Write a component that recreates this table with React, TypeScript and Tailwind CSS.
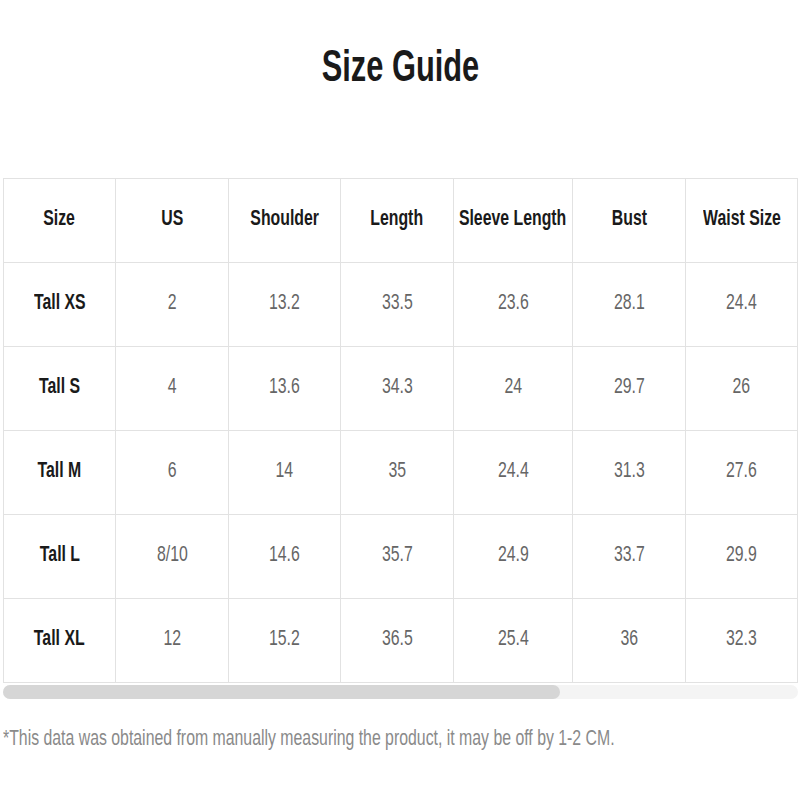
import React from "react";

const headers = ["Size", "US", "Shoulder", "Length", "Sleeve Length", "Bust", "Waist Size"];

const rows = [
  ["Tall XS", "2", "13.2", "33.5", "23.6", "28.1", "24.4"],
  ["Tall S", "4", "13.6", "34.3", "24", "29.7", "26"],
  ["Tall M", "6", "14", "35", "24.4", "31.3", "27.6"],
  ["Tall L", "8/10", "14.6", "35.7", "24.9", "33.7", "29.9"],
  ["Tall XL", "12", "15.2", "36.5", "25.4", "36", "32.3"],
];

const colWidths = ["w-[112px]", "w-[113px]", "w-[112px]", "w-[113px]", "w-[119px]", "w-[113px]", "w-[112px]"];

export default function App() {
  return (
    <div className="w-[800px] h-[800px] bg-white font-['Liberation_Sans',Arial,sans-serif] overflow-hidden">
      {/* Title */}
      <div className="flex justify-center pt-[44px] h-[178px]">
        <h1 className="inline-block text-[44px] leading-[44px] font-bold text-[#1a1a1a] scale-x-[0.7]">
          Size Guide
        </h1>
      </div>

      {/* Table */}
      <div className="px-[3px]">
        <table className="border-collapse table-fixed w-[795px]">
          <thead>
            <tr className="h-[84px]">
              {headers.map((h, i) => (
                <th
                  key={h}
                  className={`${colWidths[i]} border border-[#e2e2e2] p-0 pb-[6px] text-center align-middle`}
                >
                  <div className="flex justify-center">
                    <span className="inline-block whitespace-nowrap text-[22px] font-bold text-[#1a1a1a] scale-x-[0.72]">
                      {h}
                    </span>
                  </div>
                </th>
              ))}
            </tr>
          </thead>
          <tbody>
            {rows.map((r) => (
              <tr key={r[0]} className="h-[84px]">
                {r.map((c, i) => (
                  <td
                    key={i}
                    className="border border-[#e2e2e2] p-0 pb-[6px] text-center align-middle"
                  >
                    <span
                      className={`inline-block whitespace-nowrap text-[22px] scale-x-[0.72] ${
                        i === 0 ? "font-bold text-[#1a1a1a]" : "text-[#666666]"
                      }`}
                    >
                      {c}
                    </span>
                  </td>
                ))}
              </tr>
            ))}
          </tbody>
        </table>

        {/* Scrollbar */}
        <div className="mt-[2px] h-[14px] w-[795px] rounded-full bg-[#f4f4f4]">
          <div className="h-[14px] w-[557px] rounded-full bg-[#d6d6d6]" />
        </div>
      </div>

      {/* Footnote */}
      <p className="mt-[22px] ml-[3px] whitespace-nowrap text-[22px] text-[#8a8a8a] origin-left scale-x-[0.72]">
        *This data was obtained from manually measuring the product, it may be off by 1-2 CM.
      </p>
    </div>
  );
}
